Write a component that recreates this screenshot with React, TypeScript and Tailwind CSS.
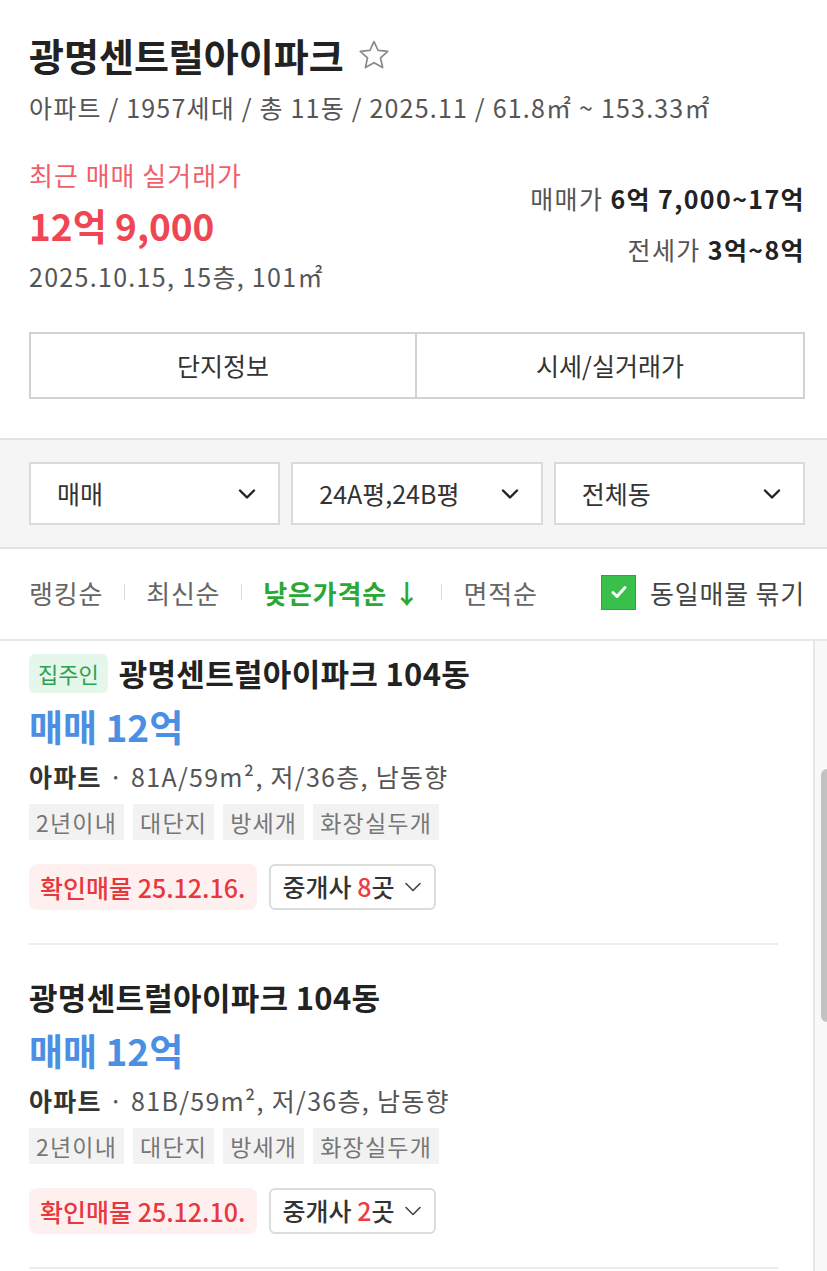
import React from 'react';

const FONT = "font-['Noto_Sans_CJK_KR','Noto_Sans',sans-serif]";

const Chevron = ({ className = '' }: { className?: string }) => (
  <svg viewBox="0 0 18 10" className={className} fill="none" stroke="currentColor" strokeWidth={2.4} strokeLinecap="round" strokeLinejoin="round">
    <path d="M2 1.5l7 7 7-7" />
  </svg>
);

const SmallChevron = () => (
  <svg viewBox="0 0 18 10" className="w-[18px] h-[10px] text-[#444]" fill="none" stroke="currentColor" strokeWidth={1.6} strokeLinecap="round" strokeLinejoin="round">
    <path d="M2 1.5l7 7 7-7" />
  </svg>
);

interface Listing {
  owner?: boolean;
  type: string;
  confirmed: string;
  agents: number;
}

const listings: Listing[] = [
  { owner: true, type: '81A', confirmed: '25.12.16.', agents: 8 },
  { type: '81B', confirmed: '25.12.10.', agents: 2 },
];

const tags = ['2년이내', '대단지', '방세개', '화장실두개'];

const ListingItem = ({ item }: { item: Listing }) => (
  <div className={`border-b-2 border-[#ececec] pb-[33px] ${item.owner ? 'pt-[12px]' : 'pt-[32px]'}`}>
    <div className="flex items-center gap-[11px] h-[40px]">
      {item.owner && (
        <span className="h-[39px] px-[9px] rounded-[6px] bg-[#e5f6ea] text-[#2ca055] text-[22px] leading-[39px]">집주인</span>
      )}
      <h3 className="text-[31px] font-bold text-[#222] tracking-[0.3px]">광명센트럴아이파크 104동</h3>
    </div>
    <div className="mt-[9px] text-[37px] font-semibold text-[#4a8fe3] leading-[48px]">매매 12억</div>
    <div className="mt-[10px] text-[25px] text-[#555] leading-[32px] tracking-[1.3px]">
      <span className="font-bold text-[#333]">아파트</span> · {item.type}/59m², 저/36층, 남동향
    </div>
    <div className="mt-[12px] flex gap-[9px]">
      {tags.map(t => (
        <span key={t} className="h-[36px] px-[7px] bg-[#f2f2f2] text-[#777] text-[23px] leading-[36px] tracking-[1.2px]">{t}</span>
      ))}
    </div>
    <div className="mt-[24px] flex gap-[12px]">
      <span className="h-[46px] px-[11px] rounded-[8px] bg-[#fff0f0] text-[#e8373e] text-[25px] font-medium leading-[46px]">확인매물 {item.confirmed}</span>
      <span className="h-[46px] px-[12px] rounded-[6px] border-2 border-[#dcdcdc] flex items-center gap-[10px] text-[25px] font-medium text-[#333]">
        <span>중개사 <span className="text-[#f03a40]">{item.agents}</span>곳</span>
        <SmallChevron />
      </span>
    </div>
  </div>
);

export default function App() {
  return (
    <div className={`w-[827px] h-[1271px] overflow-hidden bg-white ${FONT}`}>
      {/* Header */}
      <section className="pl-[29px] pr-[22px] pt-[29px] pb-[39px]">
        <div className="flex items-center gap-[13px]">
          <h1 className="text-[38px] font-bold text-[#222] leading-[52px]">광명센트럴아이파크</h1>
          <svg viewBox="0 0 24 24" className="w-[34px] h-[34px] text-[#8a8a8a]" fill="none" stroke="currentColor" strokeWidth={1.2} strokeLinejoin="round">
            <path d="M12 2.5l2.9 6.3 6.8.7-5.1 4.6 1.5 6.8L12 17.4l-6.1 3.5 1.5-6.8-5.1-4.6 6.8-.7z" />
          </svg>
        </div>
        <p className="mt-[8px] text-[25px] text-[#555] leading-[36px] tracking-[1.2px]">아파트 / 1957세대 / 총 11동 / 2025.11 / 61.8㎡ ~ 153.33㎡</p>

        <div className="mt-[32px] flex justify-between">
          <div>
            <p className="text-[26px] text-[#f0606a] leading-[36px] tracking-[1px]">최근 매매 실거래가</p>
            <p className="mt-[8px] text-[37px] font-semibold text-[#f04553] leading-[48px]">12억 9,000</p>
            <p className="mt-[9px] text-[25px] text-[#555] leading-[36px] tracking-[1.3px]">2025.10.15, 15층, 101㎡</p>
          </div>
          <div className="pt-[23px] flex flex-col items-end gap-[15px] text-[25px] leading-[36px] tracking-[1.4px]">
            <p className="text-[#555]">매매가 <span className="font-semibold text-[#222]">6억 7,000~17억</span></p>
            <p className="text-[#555]">전세가 <span className="font-semibold text-[#222]">3억~8억</span></p>
          </div>
        </div>

        <div className="mt-[38px] grid grid-cols-2 border-2 border-[#d2d2d2] h-[67px]">
          <button className="border-r-2 border-[#d2d2d2] text-[25px] text-[#333]">단지정보</button>
          <button className="text-[25px] text-[#333]">시세/실거래가</button>
        </div>
      </section>

      {/* Filters */}
      <section className="border-t-2 border-b-2 border-[#e3e3e3] bg-[#f5f5f5] pl-[29px] pr-[22px] pt-[22px] pb-[22px] grid grid-cols-3 gap-[11px]">
        {['매매', '24A평,24B평', '전체동'].map(label => (
          <div key={label} className="h-[63px] bg-white border-2 border-[#dadada] flex items-center justify-between pl-[26px] pr-[22px]">
            <span className="text-[25px] text-[#333]">{label}</span>
            <Chevron className="w-[18px] h-[10px] text-[#222]" />
          </div>
        ))}
      </section>

      {/* Sort */}
      <div className="h-[92px] border-b-2 border-[#e8e8e8] pl-[29px] pr-[22px] flex items-center justify-between text-[26px] tracking-[0.8px]">
        <div className="flex items-center gap-[21px] text-[#666] pb-[4px]">
          <span>랭킹순</span>
          <span className="w-px h-[16px] bg-[#dcdcdc]" />
          <span>최신순</span>
          <span className="w-px h-[16px] bg-[#dcdcdc]" />
          <span className="font-bold text-[#2aa836]">낮은가격순 ↓</span>
          <span className="w-px h-[16px] bg-[#dcdcdc]" />
          <span>면적순</span>
        </div>
        <label className="flex items-center gap-[14px] text-[#444] pb-[4px]">
          <span className="w-[35px] h-[35px] bg-[#38c04a] border border-[#2ea83e] flex items-center justify-center">
            <svg viewBox="0 0 20 20" className="w-[20px] h-[20px]" fill="none" stroke="white" strokeWidth={3} strokeLinecap="round" strokeLinejoin="round">
              <path d="M4 10.5l4 4 8-9" />
            </svg>
          </span>
          동일매물 묶기
        </label>
      </div>

      {/* Listings */}
      <div className="flex h-[640px]">
        <div className="flex-1 pl-[29px] pr-[35px]">
          {listings.map((l, i) => (
            <ListingItem key={i} item={l} />
          ))}
        </div>
        <div className="w-[14px] bg-[#f8f8f8] border-l-2 border-[#e6e6e6] flex justify-end">
          <div className="mt-[128px] w-[6px] h-[253px] bg-[#c2c2c2] rounded-l-[6px]" />
        </div>
      </div>
    </div>
  );
}
